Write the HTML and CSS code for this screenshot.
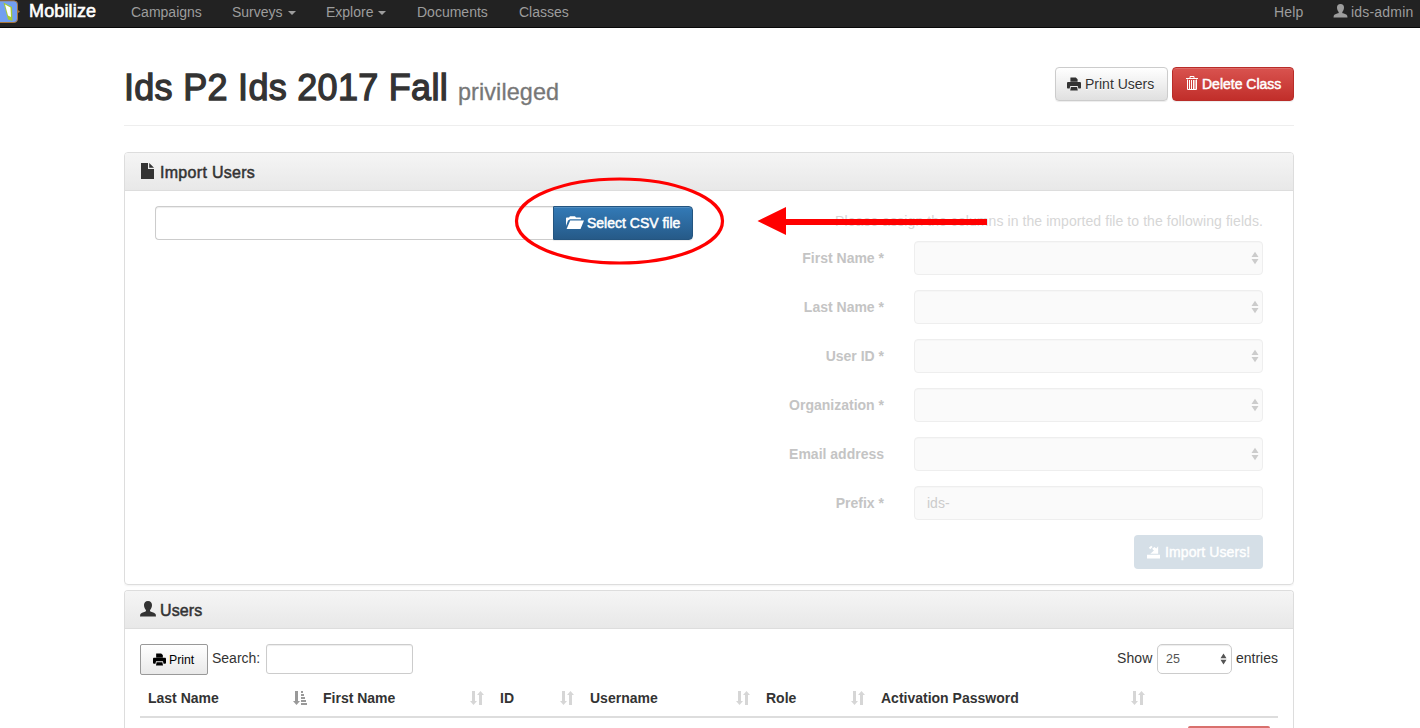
FILE: index.html
```html
<!DOCTYPE html>
<html lang="en">
<head>
<meta charset="utf-8">
<title>Mobilize</title>
<link rel="stylesheet" href="styles.css">
</head>
<body>
<svg class="defs" width="0" height="0">
  <symbol id="i-user" viewBox="0 0 16 16"><path d="M8 0C5.300 0 4 1.700 4 4c0 2 .8 3.700 1.900 5 .3.900-.1 1.400-.9 1.700C3 11.300.9 12 .3 13.300L0 15.500h16l-.3-2.200c-.6-1.300-2.700-2-4.700-2.600-.8-.3-1.200-.8-.9-1.700 1.100-1.300 1.900-3 1.900-5C12 1.700 10.700 0 8 0z"/></symbol>
  <symbol id="i-print" viewBox="0 0 14 14"><path d="M3.600 0.500h5.200l1.800 1.700v2.600H3.400V.7zM1.200 5h11.600c.7 0 1.200.5 1.200 1.200v4.300c0 .6-.4 1-1 1h-1.600L10.700 9H3.300l-.7 2.500H1c-.6 0-1-.4-1-1V6.200C0 5.500.5 5 1.200 5zM3.900 10h6.200l.7 3.500H3.200z"/></symbol>
  <symbol id="i-trash" viewBox="0 0 12 16"><path fill="none" stroke="currentColor" d="M0 3.500h12M4 3V1.500h4V3M1.500 4.500v10h9v-10M3.500 5v9M5.500 5v9M7.500 5v9M9 5v9"/></symbol>
  <symbol id="i-file" viewBox="0 0 13 16"><path d="M0 0h7v6h6v10H0zM8.200 0L13 4.800H8.200z"/></symbol>
  <symbol id="i-folder" viewBox="0 0 18 14"><path d="M0 2.500C0 1.900.4 1.500 1 1.500h2L4 .2h5l1 1.300h4c.6 0 1 .4 1 1v.7H4L2 4.400 0 10zM4.200 4.500H18L14.500 13H.6z"/></symbol>
  <symbol id="i-save" viewBox="0 0 14 14"><path d="M0 10h14v4H0zM3.500 9h8.500V.8L10 3.200 8 1.500 5.500 3.500l2 2-3 2.500zM2 2.500L4.500.2 6 1.500 3.500 4z"/></symbol>
  <symbol id="i-sort" viewBox="0 0 14 14"><path d="M2 0h3v10h2l-3.500 4L0 10h2zM9 14h3V4h2l-3.500-4L7 4h2z"/></symbol>
  <symbol id="i-sorted" viewBox="0 0 14 14"><path d="M2 0h3v10h2l-3.500 4L0 10h2zM8 0h2v2H8zM8 3h3v2H8zM8 6h4v2H8zM8 9h5v2H8zM8 12h6v2H8z"/></symbol>
  <symbol id="i-updown" viewBox="0 0 8 14"><path d="M.5 6L4 .7 7.500 6zM.5 8L4 13.300 7.500 8z"/></symbol>
</svg>

<nav class="navbar">
  <svg class="logo" viewBox="0 0 20 24"><rect x="-5.500" y=".8" width="23" height="21.700" rx="3.500" fill="#729ff1" stroke="#a67438"/><path d="M18 10l2 1.700-2 1.300z" fill="#a67438"/><path d="M3.500 2.500l8.500 4.500.5 14-4.500-1.500z" fill="#a5c936"/><path d="M5 4.500l5.500 3 .5 9.500-3-1.500z" fill="#fff"/></svg>
  <span class="brand">Mobilize</span>
  <span class="nav-item campaigns">Campaigns</span>
  <span class="nav-item surveys">Surveys<i class="caret"></i></span>
  <span class="nav-item explore">Explore<i class="caret"></i></span>
  <span class="nav-item documents">Documents</span>
  <span class="nav-item classes">Classes</span>
  <span class="nav-item help">Help</span>
  <span class="nav-item account"><svg><use href="#i-user"/></svg>ids-admin</span>
</nav>

<main class="container">
  <header class="page-header">
    <h1><span class="title">Ids P2 Ids 2017 Fall</span><small>privileged</small></h1>
    <div class="actions">
      <button class="btn btn-default"><svg class="ic14"><use href="#i-print"/></svg><span class="t-print">Print Users</span></button>
      <button class="btn btn-danger"><svg class="ic-trash"><use href="#i-trash"/></svg><span class="t-delete">Delete Class</span></button>
    </div>
  </header>

  <section class="panel import">
    <div class="panel-heading"><svg class="ic-file"><use href="#i-file"/></svg><h3>Import Users</h3></div>
    <div class="import-body">
      <div class="picker">
        <div class="file-name"></div>
        <button class="btn btn-primary"><svg class="ic-folder"><use href="#i-folder"/></svg><span class="t-select">Select CSV file</span></button>
      </div>
      <div class="mapping">
        <p class="hint">Please assign the columns in the imported file to the following fields.</p>
        <div class="row"><label>First Name *</label><div class="field"><svg><use href="#i-updown"/></svg></div></div>
        <div class="row"><label>Last Name *</label><div class="field"><svg><use href="#i-updown"/></svg></div></div>
        <div class="row"><label>User ID *</label><div class="field"><svg><use href="#i-updown"/></svg></div></div>
        <div class="row"><label>Organization *</label><div class="field"><svg><use href="#i-updown"/></svg></div></div>
        <div class="row"><label>Email address</label><div class="field"><svg><use href="#i-updown"/></svg></div></div>
        <div class="row"><label>Prefix *</label><div class="field">ids-</div></div>
        <div class="submit"><svg><use href="#i-save"/></svg><span class="t-import">Import Users!</span></div>
      </div>
    </div>
  </section>

  <section class="panel users">
    <div class="panel-heading"><svg class="ic-user"><use href="#i-user"/></svg><h3 class="plain">Users</h3></div>
    <div class="users-body">
      <div class="toolbar">
        <button class="print"><svg><use href="#i-print"/></svg><span>Print</span></button>
        <span class="search-label">Search:</span>
        <div class="search-box"></div>
        <span class="show">Show</span>
        <div class="length">25<svg><use href="#i-updown"/></svg></div>
        <span class="entries">entries</span>
      </div>
      <div class="thead">
        <div class="th sorted"><span>Last Name</span><svg><use href="#i-sorted"/></svg></div>
        <div class="th"><span>First Name</span><svg><use href="#i-sort"/></svg></div>
        <div class="th"><span>ID</span><svg><use href="#i-sort"/></svg></div>
        <div class="th"><span>Username</span><svg><use href="#i-sort"/></svg></div>
        <div class="th"><span>Role</span><svg><use href="#i-sort"/></svg></div>
        <div class="th"><span>Activation Password</span><svg><use href="#i-sort"/></svg></div>
        <div></div>
      </div>
      <div class="remove"></div>
    </div>
  </section>
</main>

<svg class="annotation" viewBox="0 0 1420 728"><ellipse cx="619.500" cy="221" rx="103" ry="42" fill="none" stroke="#f00" stroke-width="3.200"/><path d="M757.500 221L786 207v12h201v6H786v10z" fill="#f00"/></svg>
</body>
</html>
```

FILE: styles.css
```css
* { box-sizing: border-box; }
body { margin: 0; width: 1420px; height: 728px; overflow: hidden; position: relative; background: #fff; color: #333; font: 14px/20px "Liberation Sans", Arial, sans-serif; }
svg { fill: currentColor; flex: none; display: block; }
.defs { position: absolute; }
h1, h3, p { margin: 0; font-weight: 400; }
span, label { white-space: nowrap; }

.navbar { display: flex; height: 28px; background: #222; border-bottom: 1px solid #080808; color: #9d9d9d; }
.navbar > span { line-height: 25px; }
.logo { width: 20px; height: 24px; margin-right: 9px; }
.brand { width: 102px; color: #fff; font-size: 18px; letter-spacing: .15px; -webkit-text-stroke: .6px #fff; }
.navbar > .brand { line-height: 22px; }
.nav-item { display: flex; align-items: flex-start; }
.campaigns { width: 101px; }
.surveys { width: 94px; }
.explore { width: 91px; }
.documents { width: 102px; }
.help { margin-left: auto; width: 59px; letter-spacing: .15px; }
.account { width: 87px; letter-spacing: .2px; }
.account svg { width: 15px; height: 14px; margin: 4px 3px 0 0; }
.caret { margin: 11px 0 0 5px; border: 4px solid transparent; border-top-color: #9d9d9d; border-bottom: 0; }

.container { width: 1170px; height: 700px; overflow: hidden; margin-left: 124px; }
.page-header { display: flex; justify-content: space-between; height: 98px; border-bottom: 1px solid #eee; }
h1 { display: flex; align-items: baseline; height: 40px; margin-top: 40px; font-size: 36px; line-height: 40px; }
.title { width: 334px; letter-spacing: .29px; -webkit-text-stroke: 1.300px #333; }
small { font-size: 23.400px; letter-spacing: .1px; color: #777; -webkit-text-stroke: .3px #777; }
.actions { display: flex; gap: 4px; padding-top: 39px; }
.btn { display: flex; align-items: center; height: 34px; padding: 0 12px; border: 1px solid #ccc; border-radius: 4px; font: 14px/20px "Liberation Sans", Arial, sans-serif; color: #333; box-shadow: inset 0 1px 0 rgba(255,255,255,.15), 0 1px 1px rgba(0,0,0,.075); }
.btn svg { margin-right: 4px; }
.btn-default { width: 113px; padding: 0 11px; background: linear-gradient(#fff, #e0e0e0); text-shadow: 0 1px 0 #fff; }
.btn-danger { width: 122px; padding: 0 13px; color: #fff; background: linear-gradient(#d9534f, #c12e2a); border-color: #b92c28; }
.t-delete, .t-select { -webkit-text-stroke: .5px #fff; }
.ic14 { width: 14px; height: 14px; }
.ic-trash { width: 12px; height: 16px; margin-top: -2px; }

.panel { border: 1px solid #ddd; border-radius: 4px; box-shadow: 0 1px 2px rgba(0,0,0,.05); }
.import { height: 433px; margin-top: 26px; }
.users { height: 138px; margin-top: 5px; border-bottom: 0; border-radius: 4px 4px 0 0; box-shadow: none; }
.panel-heading { display: flex; align-items: center; height: 38px; padding-left: 15px; border-bottom: 1px solid #ddd; background: linear-gradient(#f5f5f5, #e8e8e8); border-radius: 3px 3px 0 0; }
h3 { font-size: 16px; line-height: 18px; letter-spacing: .3px; -webkit-text-stroke: .5px #333; padding-top: 2px; }
.plain { letter-spacing: .1px; }
.ic-file { width: 13px; height: 16px; margin: -1px 6px 0 1px; }
.ic-user { width: 16px; height: 16px; margin: -2px 4px 0 0; }

.import-body { display: flex; justify-content: space-between; padding: 15px 30px; }
.picker { display: flex; height: 34px; }
.file-name { width: 398px; border: 1px solid #ccc; border-right: 0; border-radius: 4px 0 0 4px; box-shadow: inset 0 1px 1px rgba(0,0,0,.075); }
.btn-primary { width: 140px; border-radius: 0 4px 4px 0; color: #fff; background: linear-gradient(#337ab7, #265a88); border-color: #245580; }
.btn .ic-folder { width: 18px; height: 14px; margin-right: 3px; }
.mapping { width: 500px; color: #c4c4c4; }
.hint { height: 35px; padding-top: 5px; text-align: right; color: #d6d6d6; white-space: nowrap; letter-spacing: .075px; }
.row { display: flex; height: 34px; margin-bottom: 15px; }
.row label { width: 121px; margin-right: 30px; line-height: 34px; text-align: right; font-weight: 700; }
.field { width: 349px; display: flex; align-items: center; padding-left: 12px; border: 1px solid #eee; border-radius: 4px; background: #fafafa; box-shadow: inset 0 1px 1px rgba(0,0,0,.02); color: #ccc; }
.field svg { width: 8px; height: 14px; margin: 0 3px 0 auto; }
.submit { display: flex; align-items: center; width: 129px; height: 34px; margin-left: auto; padding-left: 13px; border-radius: 4px; background: #d5dfe7; color: #fff; -webkit-text-stroke: .4px #fff; letter-spacing: .1px; }
.submit svg { width: 13px; height: 14px; margin-right: 5px; }

.users-body { padding: 15px 15px 0; }
.toolbar { display: flex; height: 38px; }
.print { display: flex; align-items: center; width: 68px; height: 31px; margin-right: 4px; padding: 0 12px; border: 1px solid #999; border-radius: 2px; background: linear-gradient(#fff, #e9e9e9); font: 12.300px/20px "Liberation Sans", Arial, sans-serif; color: #000; }
.print svg { width: 13px; height: 13px; margin-right: 3px; }
.toolbar > span { line-height: 29px; }
.search-label { width: 54px; }
.search-box { width: 147px; height: 30px; border: 1px solid #ccc; border-radius: 3px; box-shadow: inset 0 1px 1px rgba(0,0,0,.075); }
.show { margin-left: auto; width: 40px; letter-spacing: .1px; }
.length { display: flex; align-items: center; width: 75px; height: 30px; margin-right: 4px; padding-left: 8px; border: 1px solid #ccc; border-radius: 5px; font-size: 12.500px; color: #555; box-shadow: inset 0 1px 1px rgba(0,0,0,.075); }
.length svg { width: 7px; height: 12px; margin: 0 4px 0 auto; }
.entries { width: 42px; }
.thead { display: grid; grid-template-columns: 175px 177px 90px 176px 115px 280px 125px; height: 36px; border-bottom: 2px solid #ddd; }
.th { display: flex; justify-content: space-between; padding: 6px 8px; font-weight: 700; }
.th svg { width: 14px; height: 14px; margin-top: 3px; color: #d6d6d6; }
.th.sorted svg { color: #999; }
.remove { width: 82px; height: 2px; margin: 8px 8px 0 auto; background: #d9706d; border-radius: 3px 3px 0 0; }

.annotation { position: absolute; left: 0; top: 0; width: 1420px; height: 728px; pointer-events: none; }
```
